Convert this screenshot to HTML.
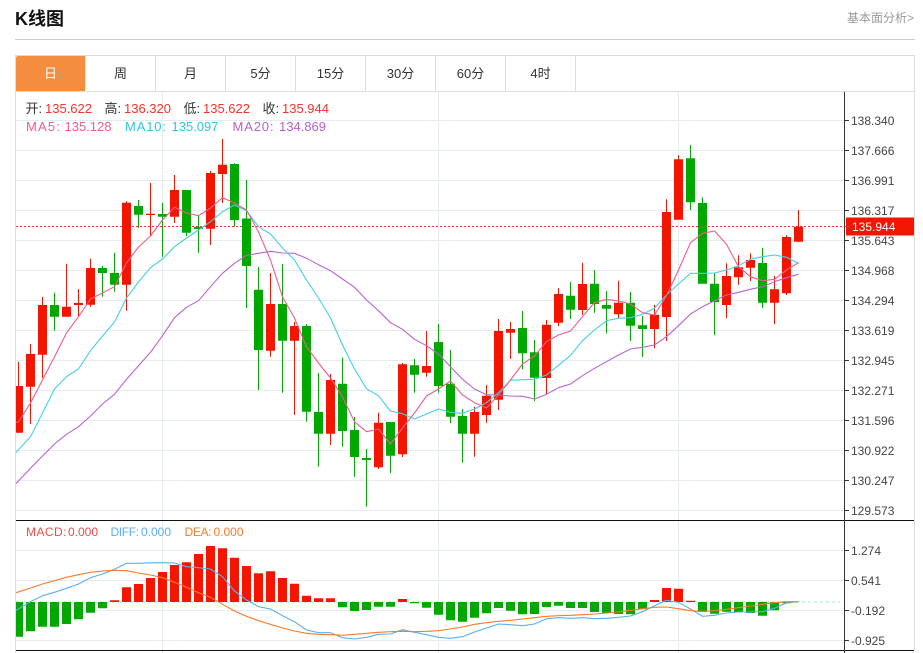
<!DOCTYPE html>
<html lang="zh"><head><meta charset="utf-8"><title>K线图</title>
<style>
html,body{margin:0;padding:0;background:#fff;width:923px;height:653px;overflow:hidden}
body{position:relative;font-family:"Liberation Sans","Noto Sans CJK SC",sans-serif}
.title{position:absolute;left:15px;top:6px;font-size:18px;font-weight:bold;line-height:26px;color:#111}
.more{position:absolute;left:847px;top:9px;font-size:12px;line-height:18px;color:#999;white-space:nowrap}
.hr{position:absolute;left:15px;top:39px;width:900px;height:1px;background:#ccc}
.tabs{position:absolute;left:15px;top:55px;width:898px;height:35px;border:1px solid #ddd;display:flex}
.tab{width:69px;height:35px;border-right:1px solid #ddd;text-align:center;font-size:13px;line-height:36px;color:#333}
.tab.on{background:#f58d3f;color:#fff;border-radius:2px 0 0 0;border-right-color:#eee}
svg{position:absolute;left:0;top:0}
svg text{font-family:"Liberation Sans","Noto Sans CJK SC",sans-serif}
</style></head><body>
<div class="title">K线图</div>
<div class="more">基本面分析&gt;</div>
<div class="hr"></div>
<svg width="923" height="653" viewBox="0 0 923 653" xmlns="http://www.w3.org/2000/svg">
<g stroke="#e4ecf2" stroke-width="1" fill="none">
<path d="M16 120.5H844M16 150.5H844M16 180.5H844M16 210.5H844M16 240.5H844M16 270.5H844M16 300.5H844M16 330.5H844M16 360.5H844M16 390.5H844M16 420.5H844M16 450.5H844M16 480.5H844M16 510.5H844M16 550.5H844M16 580.5H844M16 610.5H844M16 640.5H844"/>
<path d="M162.5 92V653M438.5 92V653M678.5 92V653"/>
</g>
<path d="M15.5 91V653M914.5 91V650" stroke="#ddd" fill="none"/>
<path d="M16 226.5H845" stroke="#f5332a" stroke-dasharray="2 2" fill="none"/>
<path fill="none" stroke="#f41500" d="M18.5 361.7V432.7M30.5 344V424M42.5 297V378M66.5 263.7V316.7M78.5 289V316.7M90.5 258.7V306.7M126.5 201.3V310.7M150.5 183V236M174.5 175V223M210.5 171V245M222.5 139V203M270.5 273V356.7M294.5 321.7V415M330.5 374V445M378.5 412.7V469M402.5 363V457M426.5 331V376.7M474.5 406.7V456.7M486.5 385V422.7M498.5 319V410M510.5 322V359M546.5 320V394.3M558.5 288V326M582.5 262.7V315M618.5 280.7V318M654.5 304.7V348.3M666.5 199.3V341M678.5 155.3V219.7M726.5 263.3V318.3M738.5 255.3V284.7M750.5 253.3V281M774.5 276V324.3M786.5 235.3V295M798.5 210V241.7"/>
<path fill="none" stroke="#00a800" d="M54.5 292.7V330.7M102.5 266V296.7M114.5 252.7V291.7M138.5 200V228M162.5 202.7V256.7M186.5 190V236M198.5 215V252.7M234.5 163.3V226.7M246.5 180V308M258.5 267V390M282.5 264V392.7M306.5 324V421.7M318.5 373V466.7M342.5 357.7V446.7M354.5 417V476.7M366.5 449V506.7M390.5 422V473M414.5 359V392.7M438.5 324V392.7M450.5 350V423.3M462.5 409V462.7M522.5 311V369.3M534.5 340V401M570.5 282V319M594.5 270V312.7M606.5 291V333.3M630.5 292V341M642.5 316V356.7M690.5 145V210M702.5 197.3V283.7M714.5 273V335.3M762.5 247.7V308"/>
<path fill="none" stroke="#f41500" stroke-width="9" d="M30.5 354V386.7M42.5 305V354.7M66.5 306.7V316.7M78.5 303V305M90.5 268V304.7M126.5 202.7V284.7M150.5 213.7V215M174.5 190V216.7M210.5 173V228.7M222.5 164.7V174M270.5 304V350.7M294.5 326V340.7M330.5 380V433.7M378.5 422.7V467.3M402.5 364.3V454.3M426.5 366V372.7M474.5 412V433.7M486.5 395.7V415M498.5 331V399.7M510.5 329V332.7M546.5 324.7V378M558.5 294V322.7M582.5 284V310M618.5 302.7V314.3M654.5 314.7V329M666.5 212V317M678.5 159.3V219.7M726.5 276V305M738.5 267.3V277.3M750.5 260V267.7M774.5 289.3V302.7M786.5 237V293.3M798.5 226.7V241.7"/>
<path fill="none" stroke="#f41500" stroke-width="7" d="M19.5 386V432.7"/>
<path fill="none" stroke="#00a800" stroke-width="9" d="M54.5 305V316.7M102.5 268V273M114.5 273V284.7M138.5 206V214.7M162.5 214V216.7M186.5 190V232.7M198.5 227V229M234.5 164V220M246.5 218.5V266M258.5 289.7V350M282.5 304V340.7M306.5 326V411.7M318.5 412V433.7M342.5 383.7V431M354.5 430V457M366.5 458V460M390.5 422V455.7M414.5 365.3V374.7M438.5 342V386M450.5 383.7V416.7M462.5 416V433.7M522.5 328V353.3M534.5 352.3V377.7M570.5 295.7V309.7M594.5 283.7V304M606.5 305V308.7M630.5 302.7V325.7M642.5 325.3V329M690.5 158.3V202.3M702.5 203V283.7M714.5 283.7V302M762.5 263V302.7"/>
<g fill="none" stroke-width="1.1" stroke-linejoin="round">
<polyline stroke="#b865cc" points="16,483.5 30.5,468.3 42.5,456 54.5,444 66.5,434.3 78.5,426.7 90.5,416 102.5,404 114.5,394.3 126.5,379.3 138.5,365.7 150.5,352.3 162.5,335.7 174.5,317.7 186.5,307.3 198.5,300.7 210.5,286.7 222.5,273.3 234.5,263.3 246.5,255.3 258.5,253.3 270.5,251.3 282.5,253 294.5,253.3 306.5,258.3 318.5,264.7 330.5,270.7 342.5,279 354.5,287.3 366.5,300 378.5,310.7 390.5,322.7 402.5,329.3 414.5,339.3 426.5,345.7 438.5,354 450.5,366.7 462.5,379.3 474.5,389 486.5,394.7 498.5,395 510.5,396 522.5,396.3 534.5,399 546.5,394.3 558.5,387.7 570.5,384 582.5,375.7 594.5,368.3 606.5,361.7 618.5,355 630.5,349 642.5,347.3 654.5,345 666.5,336.7 678.5,325.7 690.5,314 702.5,306.7 714.5,300.7 726.5,295 738.5,292.3 750.5,289.3 762.5,286.7 774.5,281.7 786.5,277.7 798.5,274.3"/>
<polyline stroke="#45cfe3" points="16,452.5 30.5,436.7 42.5,413 54.5,389 66.5,376.7 78.5,369 90.5,350.7 102.5,336 114.5,322 126.5,298 138.5,282 150.5,267.7 162.5,259 174.5,246.7 186.5,238 198.5,230 210.5,221.7 222.5,211.7 234.5,205 246.5,210.7 258.5,226.7 270.5,234 282.5,248 294.5,260 306.5,280 318.5,298 330.5,318 342.5,345 354.5,369 366.5,388.7 378.5,395.7 390.5,411 402.5,413.7 414.5,419 426.5,414 438.5,409 450.5,412.3 462.5,413.3 474.5,409 486.5,402.7 498.5,392.7 510.5,380.3 522.5,379.7 534.5,379.3 546.5,375 558.5,365.3 570.5,355.3 582.5,340.7 594.5,330 606.5,320.7 618.5,318.3 630.5,317.7 642.5,314.3 654.5,308.3 666.5,295 678.5,284 690.5,273.3 702.5,273.3 714.5,273 726.5,270 738.5,265.7 750.5,259.3 762.5,256.7 774.5,255 786.5,257.3 798.5,263.3"/>
<polyline stroke="#ee5c91" points="16,422.5 18.5,422 30.5,403 42.5,380 54.5,356.7 66.5,333 78.5,316.7 90.5,299 102.5,293 114.5,286.7 126.5,263 138.5,247 150.5,236 162.5,220 174.5,207.3 186.5,213 198.5,215.7 210.5,208 222.5,197.7 234.5,203 246.5,210 258.5,232 270.5,260 282.5,297 294.5,318 306.5,346.7 318.5,363 330.5,378 342.5,396.7 354.5,421.7 366.5,431.7 378.5,429 390.5,444 402.5,428 414.5,413 426.5,396 438.5,389 450.5,381 462.5,395 474.5,402.7 486.5,408 498.5,395 510.5,380 522.5,364 534.5,356 546.5,341.7 558.5,335 570.5,331 582.5,316.7 594.5,302.7 606.5,299.3 618.5,301 630.5,304 642.5,312.7 654.5,315 666.5,295.7 678.5,270 690.5,242.7 702.5,233.3 714.5,231 726.5,244.3 738.5,266.7 750.5,276.7 762.5,280.7 774.5,279.3 786.5,270 798.5,262.7"/>
</g>
<path d="M16 602H840" stroke="#a9dcef" stroke-dasharray="3 3" fill="none"/>
<path fill="none" stroke="#00a800" stroke-width="9" d="M66.5 602V624M78.5 602V619.3M90.5 602V612.7M102.5 602V608.3M342.5 602V607.3M354.5 602V611M366.5 602V610M378.5 602V606.7M390.5 602V606.7M414.5 602V603.3M426.5 602V607.7M438.5 602V614.7M450.5 602V620.3M462.5 602V621.7M474.5 602V617.7M486.5 602V613.3M498.5 602V608M510.5 602V610.7M522.5 602V614.3M534.5 602V614M546.5 602V607M558.5 602V605.7M570.5 602V608M582.5 602V608M594.5 602V612M606.5 602V613M618.5 602V614M630.5 602V614.3M642.5 602V609.3M702.5 602V612M714.5 602V613.7M726.5 602V611.7M738.5 602V612M750.5 602V613M762.5 602V615.7M774.5 602V610.3M786.5 602V603.3M30.5 602V631.3M42.5 602V626.7M54.5 602V626.7"/>
<path fill="none" stroke="#00a800" stroke-width="7" d="M19.5 602V636.7"/>
<path fill="none" stroke="#f41500" stroke-width="9" d="M114.5 602V600.3M126.5 602V587.3M138.5 602V584M150.5 602V578M162.5 602V572M174.5 602V565M186.5 602V562.3M198.5 602V554M210.5 602V546M222.5 602V548.3M234.5 602V557.7M246.5 602V566M258.5 602V573.3M270.5 602V571.3M282.5 602V578M294.5 602V583.7M306.5 602V595.7M318.5 602V598.3M330.5 602V598.3M402.5 602V599M654.5 602V600M666.5 602V588M678.5 602V588.7M690.5 602V600.7"/>
<g fill="none" stroke-width="1.1" stroke-linejoin="round">
<polyline stroke="#5caef2" points="16,610.5 30.5,601.7 42.5,595.7 54.5,592.3 66.5,588.3 78.5,584 90.5,577.7 102.5,574 114.5,569.3 126.5,563.3 138.5,563.3 150.5,562.8 162.5,562.7 174.5,563 186.5,566.7 198.5,567.7 210.5,569 222.5,576.7 234.5,591 246.5,600 258.5,606.7 270.5,609 282.5,615.7 294.5,621.7 306.5,630 318.5,632.7 330.5,632.7 342.5,637.7 354.5,639 366.5,637.3 378.5,634.3 390.5,634 402.5,629.7 414.5,632.3 426.5,634.7 438.5,637.3 450.5,638.3 462.5,636.7 474.5,632 486.5,628 498.5,624 510.5,624.7 522.5,625.7 534.5,624 546.5,618.7 558.5,617.7 570.5,618.3 582.5,617.7 594.5,618.7 606.5,618.3 618.5,617.3 630.5,616 642.5,611.7 654.5,605.7 666.5,600.3 678.5,602.3 690.5,609 702.5,616.3 714.5,615.3 726.5,613 738.5,612 750.5,612 762.5,611.7 774.5,608.3 786.5,603 798.5,601.7"/>
<polyline stroke="#f97a2d" points="16,592.7 30.5,588 42.5,584 54.5,580.7 66.5,577.3 78.5,574.7 90.5,572.3 102.5,571 114.5,570.3 126.5,570.7 138.5,573 150.5,575 162.5,577.7 174.5,582.3 186.5,587.3 198.5,592.7 210.5,597.3 222.5,604.3 234.5,611 246.5,616.3 258.5,620.7 270.5,624.3 282.5,628 294.5,631 306.5,633.3 318.5,634.3 330.5,634.7 342.5,635.3 354.5,634.3 366.5,633.3 378.5,632.3 390.5,631.7 402.5,631.3 414.5,631.7 426.5,631.3 438.5,630.7 450.5,629 462.5,627 474.5,624.3 486.5,622.7 498.5,621.3 510.5,620.3 522.5,619 534.5,617.7 546.5,616.3 558.5,615.7 570.5,615.3 582.5,614.7 594.5,614 606.5,613 618.5,612 630.5,610.3 642.5,608.7 654.5,607.3 666.5,607 678.5,608.7 690.5,610.7 702.5,611.3 714.5,610.7 726.5,609.3 738.5,607.7 750.5,606 762.5,604.3 774.5,602.7 786.5,601.7 798.5,601.7"/>
</g>
<path d="M16 520.5H914M16 650.5H914" stroke="#111" fill="none"/>
<path d="M844.5 92V653" stroke="#333" fill="none"/>
<path d="M845 120.5h4M845 150.5h4M845 180.5h4M845 210.5h4M845 240.5h4M845 270.5h4M845 300.5h4M845 330.5h4M845 360.5h4M845 390.5h4M845 420.5h4M845 450.5h4M845 480.5h4M845 510.5h4M845 550.5h4M845 580.5h4M845 610.5h4M845 640.5h4" stroke="#333" fill="none"/>
<g font-size="12" fill="#444">
<text x="851" y="125">138.340</text><text x="851" y="155">137.666</text><text x="851" y="185">136.991</text><text x="851" y="215">136.317</text><text x="851" y="245">135.643</text><text x="851" y="275">134.968</text><text x="851" y="305">134.294</text><text x="851" y="335">133.619</text><text x="851" y="365">132.945</text><text x="851" y="395">132.271</text><text x="851" y="425">131.596</text><text x="851" y="455">130.922</text><text x="851" y="485">130.247</text><text x="851" y="515">129.573</text>
<text x="851" y="555">1.274</text><text x="851" y="585">0.541</text><text x="851" y="615">-0.192</text><text x="851" y="645">-0.925</text>
</g>
<rect x="846" y="217.5" width="68" height="18" fill="#f41500"/>
<path d="M845 226.5h4" stroke="#f5332a"/>
<text x="852" y="231" font-size="12" fill="#fff">135.944</text>
<g font-size="13">
<text x="25.5" y="113" fill="#333">开:</text><text x="45" y="113" fill="#f5332a">135.622</text>
<text x="104.5" y="113" fill="#333">高:</text><text x="124" y="113" fill="#f5332a">136.320</text>
<text x="183.5" y="113" fill="#333">低:</text><text x="203" y="113" fill="#f5332a">135.622</text>
<text x="262.5" y="113" fill="#333">收:</text><text x="282" y="113" fill="#f5332a">135.944</text>
<text x="26" y="131" fill="#ee5c91" textLength="34">MA5:</text><text x="64.5" y="131" fill="#ee5c91">135.128</text>
<text x="125" y="131" fill="#2fc6e0" textLength="41">MA10:</text><text x="171.5" y="131" fill="#2fc6e0">135.097</text>
<text x="232.5" y="131" fill="#b85fcc" textLength="41">MA20:</text><text x="279" y="131" fill="#b85fcc">134.869</text>
</g>
<g font-size="12">
<text x="26" y="536" fill="#ee4b4b" textLength="40.5">MACD:</text><text x="68" y="536" fill="#ee4b4b">0.000</text>
<text x="110.5" y="536" fill="#5caef2" textLength="28.5">DIFF:</text><text x="141" y="536" fill="#5caef2">0.000</text>
<text x="184.5" y="536" fill="#f97a2d" textLength="27">DEA:</text><text x="213.5" y="536" fill="#f97a2d">0.000</text>
</g>
</svg>
<div class="tabs">
<div class="tab on">日</div><div class="tab">周</div><div class="tab">月</div><div class="tab">5分</div><div class="tab">15分</div><div class="tab">30分</div><div class="tab">60分</div><div class="tab">4时</div>
</div>
</body></html>
